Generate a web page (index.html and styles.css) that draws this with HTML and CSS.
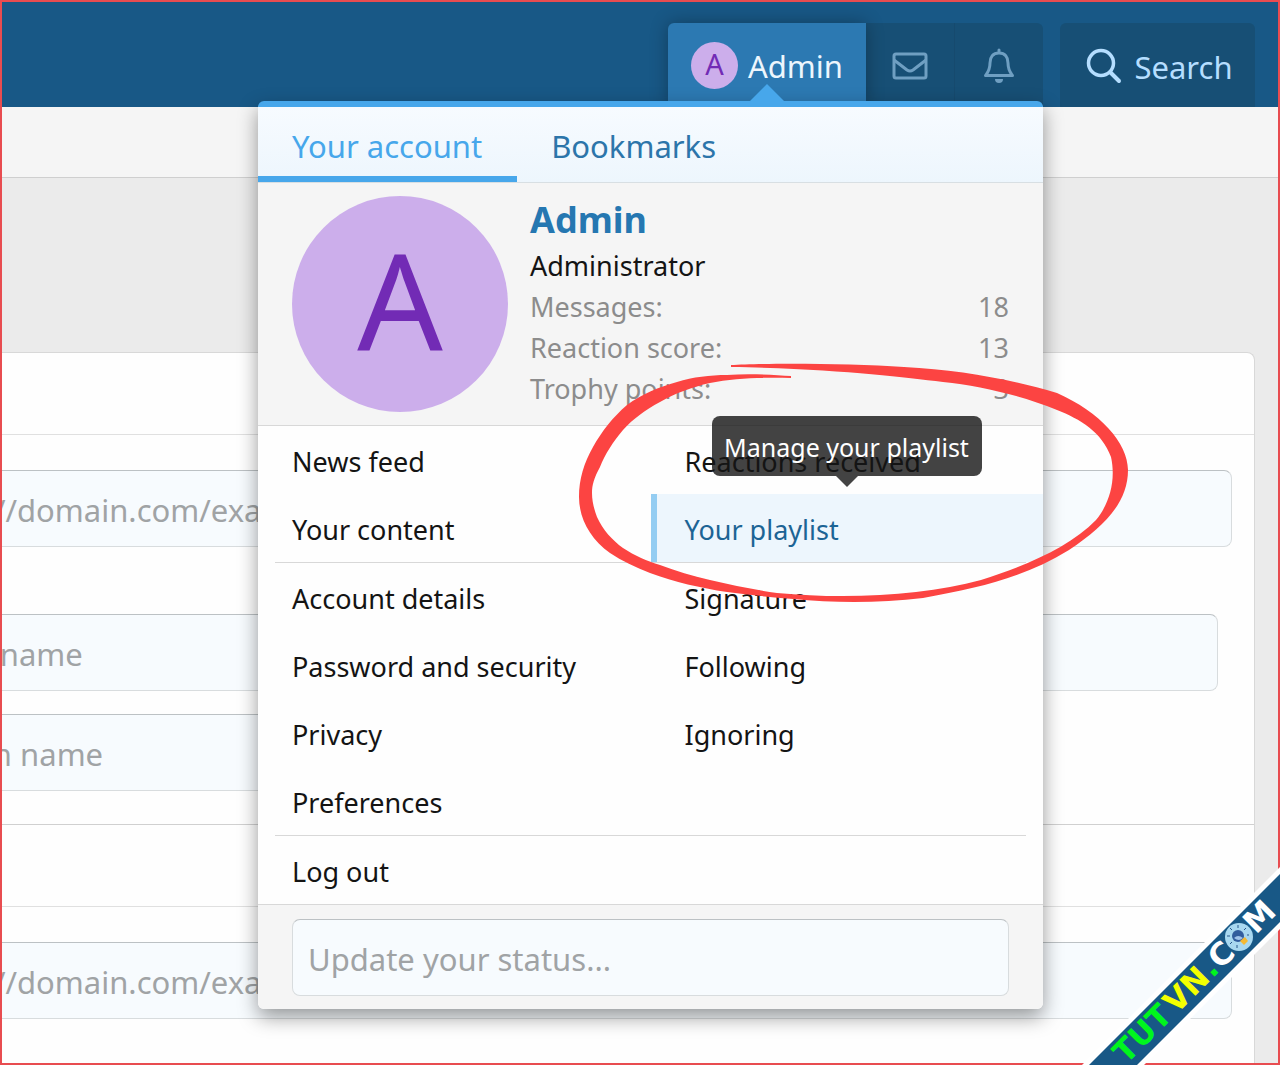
FILE: index.html
```html
<!DOCTYPE html>
<html lang="en">
<head>
<meta charset="utf-8">
<meta name="viewport" content="width=device-width, initial-scale=1">
<title>Account menu</title>
<link rel="stylesheet" href="styles.css">
</head>
<body>
<div class="page">
  <header class="header">
    <nav class="nav" aria-label="Account">
      <div class="nav-group">
        <button class="nav-item nav-user" type="button"><span class="avatar avatar-small">A</span><span class="nav-label">Admin</span></button>
        <button class="nav-item nav-icon" type="button" aria-label="Conversations">
          <svg width="36" height="28" viewBox="0 0 36 28" fill="none" stroke="currentColor" stroke-width="3" stroke-linejoin="round"><rect x="2" y="2" width="32" height="24" rx="2"/><path d="M2 8 L15 18 Q18 20 21 18 L34 8"/></svg>
        </button>
        <button class="nav-item nav-icon" type="button" aria-label="Alerts">
          <svg width="32" height="36" viewBox="0 0 32 36" fill="none" stroke="currentColor" stroke-width="3" stroke-linecap="round" stroke-linejoin="round"><path d="M16 2v3M16 5C10 5 7 9 7 15C7 22 5 24 2.500 27.500H29.500C27 24 25 22 25 15C25 9 22 5 16 5Z"/><path d="M12 31h8a4 4 0 0 1-8 0Z" fill="currentColor" stroke="none"/></svg>
        </button>
      </div>
      <button class="nav-item nav-search" type="button">
        <svg width="36" height="36" viewBox="0 0 36 36" fill="none" stroke="currentColor" stroke-linecap="round"><circle cx="15" cy="15" r="12.500" stroke-width="3.500"/><path d="M24.500 24.500L33 33" stroke-width="4"/></svg>
        <span class="nav-label">Search</span>
      </button>
    </nav>
  </header>
  <div class="subnav"></div>
  <main class="content">
    <form class="block">
      <div class="block-head"></div>
      <div class="fields">
        <input class="field" type="text" aria-label="Site address" placeholder="http://domain.com/example">
        <input class="field field-name" type="text" aria-label="Your name" placeholder="Your name">
        <input class="field field-short" type="text" aria-label="Token name" placeholder="Token name">
      </div>
      <div class="block-head block-head-second"></div>
      <div class="fields">
        <input class="field" type="text" aria-label="Second site address" placeholder="http://domain.com/example">
      </div>
    </form>
  </main>

  <section class="menu" aria-label="Your account">
    <span class="menu-arrow"></span>
    <div class="tabs">
      <a class="tab tab-active" href="#account">Your account</a>
      <a class="tab" href="#bookmarks">Bookmarks</a>
    </div>
    <div class="profile">
      <span class="avatar avatar-large">A</span>
      <div class="profile-text">
        <a class="profile-name" href="#admin">Admin</a>
        <div class="profile-role">Administrator</div>
        <dl class="stats">
          <div class="stat"><dt>Messages:</dt><dd>18</dd></div>
          <div class="stat"><dt>Reaction score:</dt><dd>13</dd></div>
          <div class="stat"><dt>Trophy points:</dt><dd>3</dd></div>
        </dl>
      </div>
    </div>
    <div class="links">
      <a class="link" href="#feed">News feed</a>
      <a class="link" href="#reactions">Reactions received</a>
      <a class="link" href="#content">Your content</a>
      <a class="link link-active" href="#playlist">Your playlist<span class="tooltip" role="tooltip">Manage your playlist</span></a>
    </div>
    <hr class="rule">
    <div class="links">
      <a class="link" href="#details">Account details</a>
      <a class="link" href="#signature">Signature</a>
      <a class="link" href="#security">Password and security</a>
      <a class="link" href="#following">Following</a>
      <a class="link" href="#privacy">Privacy</a>
      <a class="link" href="#ignoring">Ignoring</a>
      <a class="link" href="#preferences">Preferences</a>
    </div>
    <hr class="rule">
    <div class="links">
      <a class="link" href="#logout">Log out</a>
    </div>
    <div class="status">
      <input class="status-field" type="text" aria-label="Update your status" placeholder="Update your status...">
    </div>
    <svg class="marker" width="552" height="242" viewBox="578 362 552 242" aria-hidden="true">
      <path fill="#fc4442" d="M731 365C760 363 850 363 904 367C960 370 1010 379 1057 393C1100 412 1128 443 1128 470C1128 502 1105 526 1069 550C1025 577 980 588 923 598C880 603 835 603 793 599C770 597 748 595 727 592C700 588 675 582 650 573C635 567 622 561 610 553C590 539 579 518 579 497C579 479 584 463 593 447C602 431 613 417 627 405C642 394 659 387 677 382C693 377 710 375 727 375C750 373 775 375 791 376V378C765 377 735 378 710 383C692 387 676 393 660 402C645 410 633 419 623 430C613 442 605 454 600 467C594 478 592 485 592 493C592 501 594 509 597 517C603 530 612 540 623 548C635 556 647 561 660 565C676 571 692 576 710 580C732 585 755 590 777 593C850 600 925 595 981 580C1025 566 1070 547 1096 520C1110 503 1116 480 1111 457C1102 432 1080 419 1057 410C1020 395 980 386 943 382C900 377 840 369 731 367Z"/>
    </svg>
  </section>

  <svg class="ribbon" width="200" height="200" viewBox="0 0 200 200" role="img" aria-label="TUTVN.COM">
    <path class="ribbon-edge" d="M2 200L200 2V64L64 200Z"/>
    <path class="ribbon-band" d="M9 200L200 9V57L57 200Z"/>
    <g class="ribbon-text" transform="translate(46 200) rotate(-45)">
      <text x="0" y="0" fill="#00f51d">TUT</text>
      <text x="71" y="0" fill="#f4ff00">VN</text>
      <text x="122" y="0" fill="#00f51d">.</text>
      <text x="134" y="0" fill="#fff">C</text>
      <text x="184" y="0" fill="#fff">M</text>
    </g>
    <g transform="translate(159 72)">
      <circle r="14" fill="#a8d8f0"/>
      <path d="M-7-7L-9-9M-1-9V-12M-9-1H-12M-7 5L-9 7M5-7L7-9M-2 8V11M8-2H10" stroke="#28588b" stroke-width="1"/>
      <circle cx="-1" cy="-1" r="6" fill="#315d9d"/>
      <path d="M-5 1Q-1-3 4 1Q0 5-5 1Z" fill="#9fc3ea"/>
      <path d="M1 4L6 0L9 4L5 8Z" fill="#f4b932"/>
    </g>
  </svg>
</div>
</body>
</html>
```
FILE: styles.css
```css
* { box-sizing: border-box; }

body {
  margin: 0;
  background: #ebebeb;
  color: #141414;
  font-family: "Noto Sans", "Open Sans", sans-serif;
  font-size: 27px;
  line-height: 40px;
}

a { color: inherit; text-decoration: none; }
button, input { font: inherit; }

.page {
  position: relative;
  display: flex;
  flex-direction: column;
  min-height: 100vh;
  overflow: hidden;
}
.page::after {
  content: "";
  position: absolute;
  inset: 0;
  border: 2px solid #e84c50;
  pointer-events: none;
}

.header {
  padding: 23px 25px 0;
  background: #185886;
}
.nav { display: flex; justify-content: flex-end; gap: 17px; }
.nav-group { display: flex; }
.nav-item {
  display: flex;
  align-items: center;
  justify-content: center;
  height: 84px;
  border: 0;
  background: #174f75;
  color: #b5deff;
  font-size: 31px;
}
.nav-label { padding-top: 2px; }
.nav-user {
  gap: 10px;
  width: 198px;
  padding: 0 22px;
  border-radius: 6px 0 0 0;
  background: #2c79b2;
  color: #edf6fd;
  box-shadow: 0 0 18px rgba(0, 0, 0, .3);
  z-index: 1;
}
.nav-icon { width: 88px; padding: 2px 0 0; color: #6f9fc2; }
.nav-icon + .nav-icon { width: 89px; border-left: 1px solid #164a6e; border-radius: 0 6px 0 0; }
.nav-search { gap: 12px; width: 195px; padding: 2px 20px 0 24px; border-radius: 6px 6px 0 0; }
.nav-item svg { flex: none; }

.avatar {
  display: flex;
  flex: none;
  align-items: center;
  justify-content: center;
  border-radius: 50%;
  background: #ccaeeb;
  color: #722bb5;
}
.avatar-small { width: 47px; height: 47px; padding-bottom: 2px; font-size: 29px; }
.avatar-large { width: 216px; height: 216px; padding-bottom: 10px; font-size: 134px; }

.subnav { height: 71px; background: #f5f5f5; border-bottom: 1px solid #cfcfcf; }

.content { flex: 1; padding: 174px 25px 0 0; }
.block {
  min-height: 713px;
  background: #fefefe;
  border: 1px solid #d8d8d8;
  border-width: 1px 1px 0 0;
  border-radius: 0 8px 0 0;
}
.block-head { height: 82px; border-bottom: 1px solid #e0e0e0; }
.block-head-second { border-top: 1px solid #d0d0d0; height: 83px; }
.fields {
  display: flex;
  flex-direction: column;
  gap: 23px;
  margin-left: -100px;
  padding: 35px 22px 33px 0;
}
.field, .status-field {
  height: 77px;
  border: 1px solid #d8dcde;
  border-top-color: #bcc1c4;
  border-radius: 8px;
  background: #f7fbfe;
  padding: 3px 15px 0;
  font-size: 31px;
}
.field { padding: 2px 24px 0; }
.field::placeholder, .status-field::placeholder { color: #a0a3a5; opacity: 1; }
.field-name { margin: 44px 14px 0 0; }
.field-short { margin-right: 300px; }

.menu {
  position: absolute;
  z-index: 2;
  top: 101px;
  right: 237px;
  width: 785px;
  border-top: 6px solid #47a7eb;
  border-radius: 6px;
  background: #fefefe;
  box-shadow: 0 8px 20px rgba(0, 0, 0, .4);
}
.menu-arrow {
  position: absolute;
  top: -23px;
  left: 492px;
  border: 17px solid transparent;
  border-top-width: 0;
  border-bottom-color: #47a7eb;
}
.tabs {
  display: flex;
  border-bottom: 1px solid #d8dfe3;
  background: linear-gradient(#f7fbff, #edf6fd);
}
.tab {
  padding: 19px 35px 10px 34px;
  border-bottom: 6px solid transparent;
  color: #2c75aa;
  font-size: 31px;
}
.tab-active { color: #47a7eb; border-color: #47a7eb; }
.profile {
  display: flex;
  gap: 22px;
  padding: 13px 34px;
  background: #f5f5f5;
  border-bottom: 1px solid #d8d8d8;
}
.profile-text { flex: 1; line-height: 41px; }
.profile-name {
  display: block;
  padding: 3px 0 5px;
  color: #2577b1;
  font-size: 36px;
  font-weight: 700;
}
.stats { margin: 0; color: #8c8c8c; }
.stat { display: flex; justify-content: space-between; }
.stat dd { margin: 0; }

.links { display: grid; grid-template-columns: 1fr 1fr; }
.link {
  position: relative;
  padding: 16px 0 12px 28px;
  border-left: 6px solid transparent;
}
.link-active { color: #1c6495; background: #edf6fd; border-color: #94cdf2; }
.rule { height: 1px; margin: 0 17px; border: 0; background: #d8d8d8; }

.tooltip {
  position: absolute;
  left: 55px;
  bottom: calc(100% + 18px);
  padding: 11px 0 9px;
  width: 270px;
  border-radius: 8px;
  background: rgba(20, 20, 20, .8);
  color: #fff;
  font-size: 25px;
  text-align: center;
  white-space: nowrap;
}
.tooltip::after {
  content: "";
  position: absolute;
  top: 100%;
  left: 50%;
  margin-left: -11px;
  border: 11px solid transparent;
  border-bottom-width: 0;
  border-top-color: rgba(20, 20, 20, .8);
}

.status {
  display: flex;
  padding: 14px 34px 13px;
  border-top: 1px solid #d8d8d8;
  border-radius: 0 0 6px 6px;
  background: #f5f5f5;
}
.status-field { flex: 1; min-width: 0; }

.marker { position: absolute; left: 320px; top: 255px; pointer-events: none; }

.ribbon { position: absolute; right: 0; bottom: 0; z-index: 3; }
.ribbon-edge { fill: #fff; }
.ribbon-band { fill: #185886; }
.ribbon-text { font: 700 31px "DejaVu Sans", sans-serif; }
```
